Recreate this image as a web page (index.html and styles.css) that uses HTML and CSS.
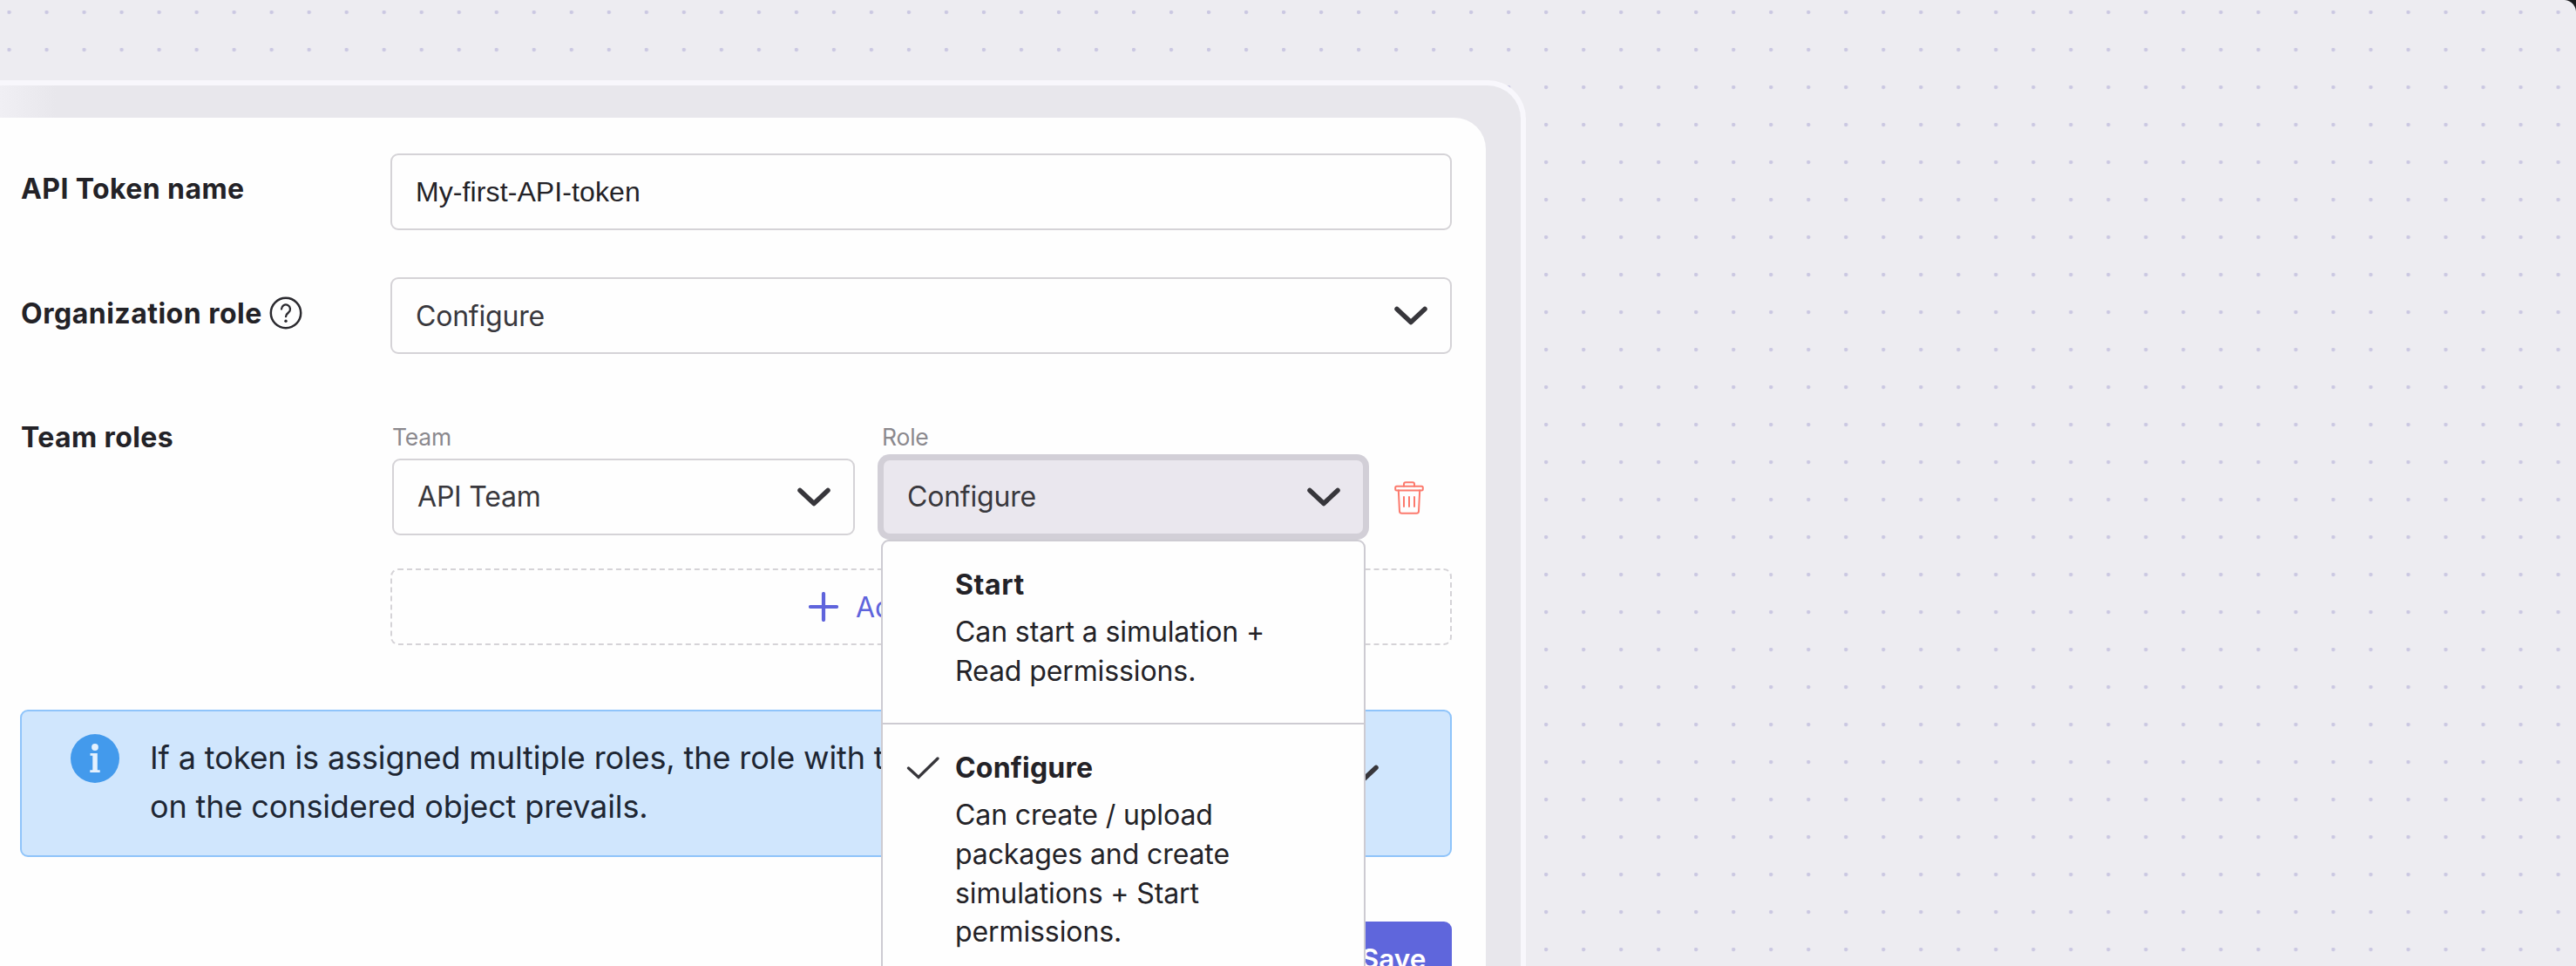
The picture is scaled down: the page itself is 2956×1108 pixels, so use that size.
FILE: index.html
```html
<!DOCTYPE html>
<html lang="en">
<head>
<meta charset="utf-8">
<title>API token</title>
<link rel="stylesheet" href="styles.css">
</head>
<body>
<main class="page">
  <section class="frame">
    <form class="card">
      <div class="row">
        <span class="label">API Token name</span>
        <div class="field field-input"><span class="v-name">My-first-API-token</span></div>
      </div>
      <div class="row">
        <span class="label label-org">Organization role
          <svg class="help" viewBox="0 0 38 38"><circle cx="19" cy="19" r="17.200" fill="none" stroke="#2b2a2f" stroke-width="2.500"/><path d="M14 14.500a5 5 0 1 1 8 4c-1.900 1.400-3 2.400-3 4.700" fill="none" stroke="#2b2a2f" stroke-width="2.300" stroke-linecap="round"/><circle cx="19" cy="28.300" r="1.700" fill="#2b2a2f"/></svg>
        </span>
        <div class="field"><span class="value">Configure</span><svg class="chev" viewBox="0 0 38 22"><path d="M3 3.500 19 18.500 35 3.500"/></svg></div>
      </div>
      <div class="row row-team">
        <span class="label label-team">Team roles</span>
        <div class="teams">
          <div class="team-line">
            <div class="col col-team">
              <span class="caption">Team</span>
              <div class="field"><span class="value">API Team</span><svg class="chev" viewBox="0 0 38 22"><path d="M3 3.500 19 18.500 35 3.500"/></svg></div>
            </div>
            <div class="col col-role">
              <span class="caption">Role</span>
              <div class="field field-focus"><span class="value">Configure</span><svg class="chev" viewBox="0 0 38 22"><path d="M3 3.500 19 18.500 35 3.500"/></svg></div>
              <div class="menu">
                <div class="option">
                  <strong class="opt-title opt-start">Start</strong>
                  <span class="opt-text">Can start a simulation +<br>Read permissions.</span>
                </div>
                <div class="option option-on">
                  <svg class="check" viewBox="0 0 38 26"><path d="M2.500 13 14 23.500 36 2"/></svg>
                  <strong class="opt-title">Configure</strong>
                  <span class="opt-text">Can create / upload<br>packages and create<br>simulations + Start<br>permissions.</span>
                </div>
              </div>
            </div>
            <svg class="trash" viewBox="0 0 34 38"><g fill="none" stroke="#fc7a6d" stroke-width="2" stroke-linejoin="round" stroke-linecap="round"><rect x="1.200" y="5.800" width="31.600" height="4.700" rx="1.500"/><path d="M11 5.800V3.200q0-2 2-2h8q2 0 2 2v2.600M4.800 10.500 6 34.500q.2 2.300 2.500 2.300h17q2.300 0 2.500-2.300l1.200-24M11 18v11M17 18v11M23 18v11"/></g></svg>
          </div>
          <div class="add"><svg class="plus" viewBox="0 0 34 34"><path d="M17 2v30M2 17h30"/></svg><span class="add-text">Add</span></div>
        </div>
      </div>
      <div class="info">
        <svg class="info-icon" viewBox="0 0 56 56"><circle cx="28" cy="28" r="28" fill="#439aec"/><circle cx="28" cy="15" r="3.900" fill="#e4f1fe"/><path d="M22.500 22h8.300v19.300h2.900V44H22.300v-2.700h3V24.700h-2.800z" fill="#e4f1fe"/></svg>
        <p class="info-text">If a token is assigned multiple roles, the role with the<br>on the considered object prevails.</p>
        <svg class="chev" viewBox="0 0 38 22"><path d="M3 3.500 19 18.500 35 3.500"/></svg>
      </div>
      <div class="actions"><button type="button" class="save">Save</button></div>
    </form>
  </section>
  <span class="corner"></span>
</main>
</body>
</html>
```
FILE: styles.css
```css
* { box-sizing: border-box; }
body { margin: 0; background: #edecf1; font-family: Inter, "Liberation Sans", sans-serif; color: #232227; }
.page {
  position: relative; height: 1108px; overflow: hidden; padding-top: 92px;
  background: radial-gradient(circle at 2px 2px, #cbc8e2 1.700px, rgba(203,200,226,0) 2.700px) 8.500px 12px / 43.030px 43px, #edecf1;
}
.corner { position: absolute; top: 0; right: 0; width: 14px; height: 14px; background: radial-gradient(circle at 0 14px, transparent 13.500px, #1b1b1d 14.500px); }
.frame {
  width: 1751px; height: 1016px; padding: 37px 40px 0 0;
  border: solid #f8f7fc; border-width: 6px 6px 0 0; border-radius: 0 44px 0 0;
  background: linear-gradient(90deg, #f0eff4, #e8e7ec 64px);
}
.card { height: 973px; padding: 41px 39px 0 23px; background: #fefefe; border-radius: 0 36px 0 0; }
.row { display: grid; grid-template-columns: 425px 1fr; height: 88px; margin-bottom: 54px; }
.label { display: flex; align-items: center; height: 80px; gap: 8px; padding-left: 1px; font-size: 32px; font-weight: 700; letter-spacing: 0.400px; white-space: nowrap; }
.label-org { height: 82px; letter-spacing: 0.500px; }
.help { width: 38px; height: 38px; }
.field { display: flex; align-items: center; justify-content: space-between; height: 88px; padding: 0 26px 0 27px; border: 2px solid #d5d3d7; border-radius: 9px; background: #fefefe; }
.value { font-size: 32px; letter-spacing: -0.200px; color: #39383d; }
.team-line .value { padding-bottom: 2px; }
.v-name { font: 32px "Liberation Sans", Arial, sans-serif; letter-spacing: 0.100px; }
.chev { width: 38px; height: 22px; flex: none; }
.chev path { fill: none; stroke: #37363b; stroke-width: 5.500; stroke-linecap: round; stroke-linejoin: round; }
.row-team { height: 280px; margin-bottom: 0; padding-top: 24px; }
.label-team { height: 35px; }
.team-line { display: flex; padding-left: 2px; }
.col { position: relative; }
.caption { display: block; height: 42px; line-height: 35px; padding-left: 0; font-size: 26.500px; letter-spacing: -0.200px; color: #8b898e; }
.col-team { width: 531px; margin-right: 31px; }
.col-role { width: 554px; }
.field-focus { background: #eae7ee; border-color: #d2cfd7; box-shadow: 0 0 0 5px #d2cfd7; }
.trash { width: 34px; height: 38px; margin: 68px 0 0 34px; }
.add { display: flex; align-items: center; height: 88px; margin-top: 38px; padding-left: 478px; border: 2px dashed #d5d3d7; border-radius: 9px; font-size: 32px; color: #5f64dc; }
.plus { width: 34px; height: 34px; margin-right: 20px; }
.plus path { stroke: #5f64dc; stroke-width: 4.200; stroke-linecap: round; }
.menu { position: absolute; z-index: 2; left: -1px; top: 135px; width: 556px; height: 520px; border: 2px solid #cdcbd2; border-radius: 9px; background: #fefefe; }
.option { position: relative; height: 210px; padding: 28px 0 0 83px; border-bottom: 2px solid #cdcbd2; color: #232227; }
.opt-title { display: block; font-size: 32px; line-height: 44px; letter-spacing: 0.200px; }
.opt-start { letter-spacing: 0.600px; }
.opt-text { display: block; margin-top: 10px; font-size: 32px; line-height: 44.800px; letter-spacing: -0.100px; white-space: nowrap; }
.option-on { border: 0; height: 300px; }
.check { position: absolute; left: 27px; top: 37px; width: 38px; height: 26px; }
.check path { fill: none; stroke: #37363b; stroke-width: 3.300; stroke-linecap: round; }
.info { display: flex; width: 1643px; height: 169px; margin-top: 74px; padding: 26px 82px 0 56px; border: 2px solid #8fc4fa; border-radius: 9px; background: #d0e6fd; color: #1e2633; }
.info-icon { width: 56px; height: 56px; flex: none; }
.info-text { flex: 1; margin: -1px 0 0 35px; font-size: 36px; line-height: 56px; letter-spacing: -0.120px; white-space: nowrap; }
.info .chev { margin-top: 35px; }
.actions { display: flex; justify-content: flex-end; margin-top: 74px; }
.save { width: 130px; height: 88px; border: 0; border-radius: 9px; background: #5f66dc; color: #fff; font: 600 31.500px Inter, sans-serif; padding: 0 4px 3px 0; }
```
